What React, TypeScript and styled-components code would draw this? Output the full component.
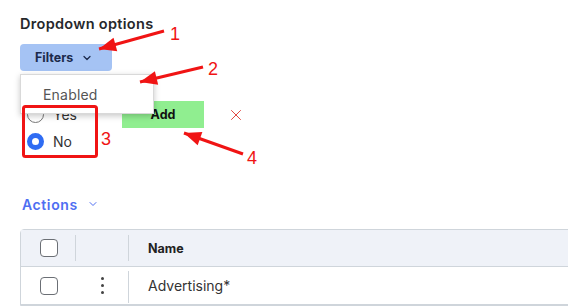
import React from "react";
import styled, { createGlobalStyle } from "styled-components";
import { ChevronDown, X } from "lucide-react";

const GlobalStyle = createGlobalStyle`
  html, body {
    margin: 0;
    padding: 0;
    background: #ffffff;
    font-family: Inter, "Open Sans", sans-serif;
    color: #222;
  }
  * { box-sizing: border-box; }
`;

type Pt = [number, number];

const arrowHead = (tail: Pt, tip: Pt, len = 17, half = 7) => {
  const dx = tip[0] - tail[0];
  const dy = tip[1] - tail[1];
  const d = Math.hypot(dx, dy);
  const ux = dx / d;
  const uy = dy / d;
  const bx = tip[0] - ux * len;
  const by = tip[1] - uy * len;
  return `${tip[0]},${tip[1]} ${bx - uy * half},${by + ux * half} ${bx + uy * half},${by - ux * half}`;
};

const arrows: { tail: Pt; tip: Pt; label: string; lx: number; ly: number }[] = [
  { tail: [164, 31], tip: [99, 49], label: "1", lx: 170, ly: 40 },
  { tail: [203, 67], tip: [140, 82], label: "2", lx: 208, ly: 75 },
  { tail: [243, 154], tip: [184, 133], label: "4", lx: 247, ly: 164 },
];

const App = () => {
  return (
    <Page>
      <GlobalStyle />
      <Title>Dropdown options</Title>
      <FilterWrap>
        <FilterButton>
          Filters <ChevronDown size={12} strokeWidth={2.5} />
        </FilterButton>
        <Menu>
          <MenuItem>Enabled</MenuItem>
        </Menu>
      </FilterWrap>

      <OptionsRow>
        <RadioGroup>
          <RadioRow>
            <Radio />
            <RadioLabel>Yes</RadioLabel>
          </RadioRow>
          <RadioRow>
            <Radio checked />
            <RadioLabel>No</RadioLabel>
          </RadioRow>
        </RadioGroup>
        <AddButton>Add</AddButton>
        <Remove>
          <X size={18} strokeWidth={1.3} />
        </Remove>
      </OptionsRow>

      <Actions>
        Actions <ChevronDown size={12} strokeWidth={2} />
      </Actions>

      <Table>
        <HeadRow>
          <Cell w={55} divider>
            <Checkbox />
          </Cell>
          <Cell w={53} divider />
          <NameCell head>Name</NameCell>
        </HeadRow>
        <BodyRow>
          <Cell w={55}>
            <Checkbox />
          </Cell>
          <Cell w={53} divider full>
            <Kebab>
              <i />
              <i />
              <i />
            </Kebab>
          </Cell>
          <NameCell>Advertising*</NameCell>
        </BodyRow>
      </Table>

      <Overlay width="568" height="308">
        <rect x="23.5" y="106.5" width="73" height="50" rx="2" fill="none" stroke="#f01414" strokeWidth="3" />
        {arrows.map((a) => (
          <g key={a.label}>
            <line x1={a.tail[0]} y1={a.tail[1]} x2={a.tip[0]} y2={a.tip[1]} stroke="#f01414" strokeWidth="3" />
            <polygon points={arrowHead(a.tail, a.tip)} fill="#f01414" />
            <AnnoText x={a.lx} y={a.ly}>{a.label}</AnnoText>
          </g>
        ))}
        <AnnoText x="101" y="145">3</AnnoText>
      </Overlay>
    </Page>
  );
};

export default App;

const Page = styled.div`
  position: relative;
  width: 568px;
  height: 308px;
  overflow: hidden;
  padding: 14px 0 0 20px;
`;

const Title = styled.div`
  font-size: 14.5px;
  font-weight: 600;
  letter-spacing: 0.3px;
  color: #26282c;
  line-height: 20px;
  margin-bottom: 10px;
`;

const FilterWrap = styled.div`
  position: relative;
  width: 92px;
`;

const FilterButton = styled.button`
  width: 92px;
  height: 27px;
  border: 0;
  border-radius: 4px;
  background: #a5c3f4;
  color: #1c2a4c;
  font-family: inherit;
  font-size: 12.5px;
  font-weight: 700;
  display: flex;
  align-items: center;
  gap: 8px;
  padding: 0 0 0 15px;
  svg { margin-top: 1px; }
`;

const Menu = styled.div`
  position: absolute;
  top: 30px;
  left: 0;
  width: 134px;
  height: 40px;
  background: #fff;
  border: 1px solid #d9d9d9;
  box-shadow: 0 2px 6px rgba(0, 0, 0, 0.22);
  z-index: 2;
  display: flex;
  align-items: center;
`;

const MenuItem = styled.div`
  padding-left: 22px;
  font-size: 14px;
  letter-spacing: 0.2px;
  color: #555;
`;

const OptionsRow = styled.div`
  display: flex;
  align-items: flex-start;
  margin-top: 30px;
`;

const RadioGroup = styled.div`
  display: flex;
  flex-direction: column;
  width: 102px;
  padding-left: 7px;
`;

const RadioRow = styled.div`
  height: 27px;
  display: flex;
  align-items: center;
  gap: 9px;
`;

const Radio = styled.span<{ checked?: boolean }>`
  width: 17px;
  height: 17px;
  border-radius: 50%;
  border: ${(p) => (p.checked ? "5.5px solid #2f6cf3" : "1px solid #777")};
  background: #fff;
  flex: none;
`;

const RadioLabel = styled.span`
  font-size: 14px;
  color: #333;
`;

const AddButton = styled.button`
  width: 82px;
  height: 27px;
  border: 0;
  background: #90ee90;
  color: #111;
  font-family: inherit;
  font-size: 12.5px;
  font-weight: 700;
`;

const Remove = styled.span`
  color: #e0423c;
  display: flex;
  align-items: center;
  height: 27px;
  margin-left: 23px;
`;

const Actions = styled.div`
  display: flex;
  align-items: center;
  gap: 9px;
  margin-top: 39px;
  padding-left: 2px;
  height: 20px;
  font-size: 14px;
  font-weight: 600;
  letter-spacing: 0.6px;
  color: #4e6ef2;
`;

const Table = styled.div`
  margin-top: 15px;
  width: 600px;
  border: 1px solid #cfd5db;
  border-radius: 4px 0 0 0;
`;

const HeadRow = styled.div`
  display: flex;
  height: 37px;
  background: #eff2f8;
  border-bottom: 1px solid #cfd5db;
`;

const BodyRow = styled.div`
  display: flex;
  height: 38px;
  background: #fff;
  border-bottom: 1px solid #cfd5db;
`;

const Cell = styled.div<{ w: number; divider?: boolean; full?: boolean }>`
  position: relative;
  width: ${(p) => p.w}px;
  flex: none;
  display: flex;
  align-items: center;
  justify-content: center;
  &::after {
    content: "";
    display: ${(p) => (p.divider ? "block" : "none")};
    position: absolute;
    right: 0;
    top: ${(p) => (p.full ? 4 : 5)}px;
    bottom: ${(p) => (p.full ? 1 : 5)}px;
    width: 1px;
    background: #cfd5db;
  }
`;

const NameCell = styled.div<{ head?: boolean }>`
  display: flex;
  align-items: center;
  padding-left: 19px;
  font-size: ${(p) => (p.head ? "12.5px" : "14px")};
  font-weight: ${(p) => (p.head ? 700 : 400)};
  color: ${(p) => (p.head ? "#222" : "#333")};
`;

const Checkbox = styled.span`
  width: 18px;
  height: 18px;
  border: 1.3px solid #6b6f75;
  border-radius: 4px;
  background: #fff;
`;

const Kebab = styled.span`
  display: flex;
  flex-direction: column;
  gap: 3.5px;
  i {
    width: 3.5px;
    height: 3.5px;
    border-radius: 50%;
    background: #444;
  }
`;

const Overlay = styled.svg`
  position: absolute;
  left: 0;
  top: 0;
  z-index: 5;
  pointer-events: none;
`;

const AnnoText = styled.text`
  font-family: "Liberation Sans", Arial, sans-serif;
  font-size: 18px;
  fill: #f01414;
`;
